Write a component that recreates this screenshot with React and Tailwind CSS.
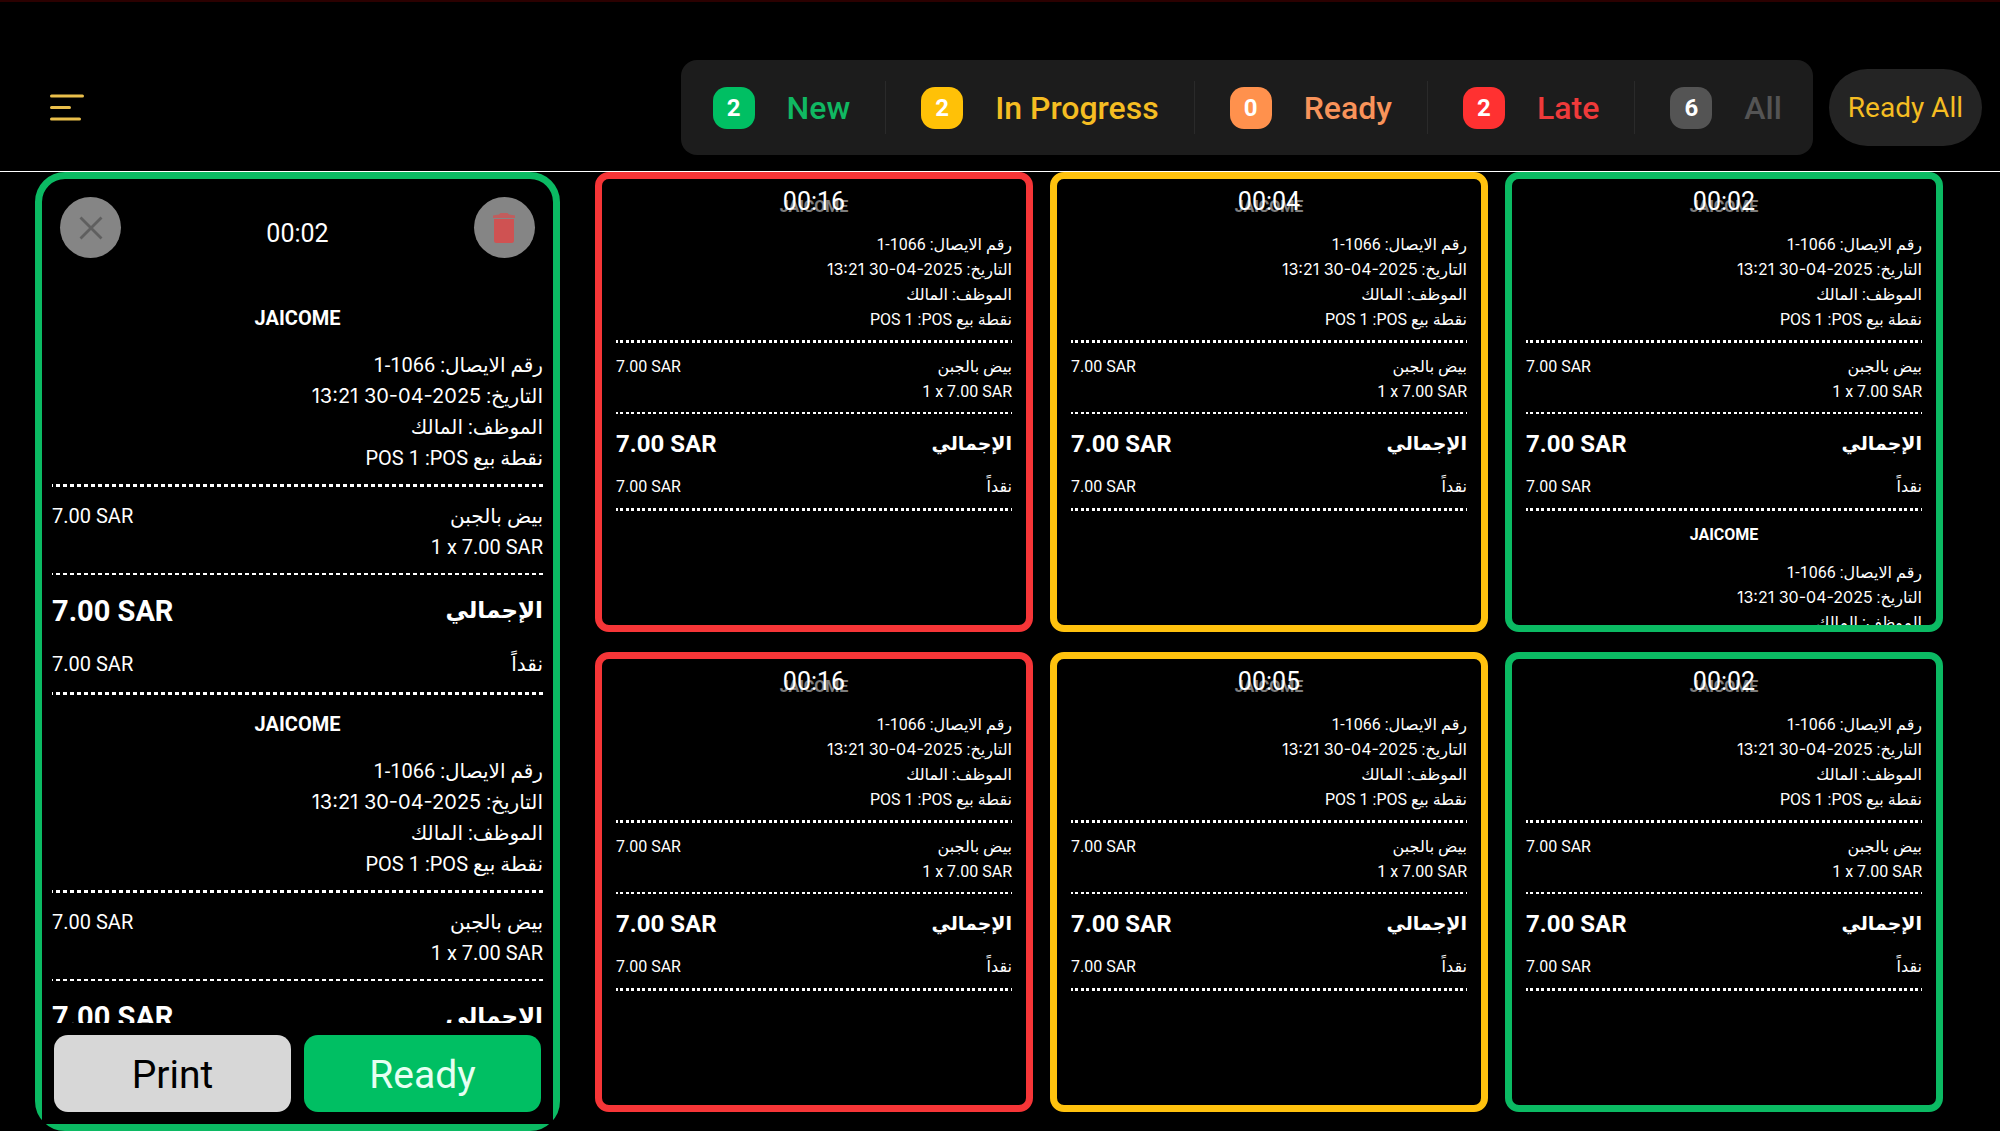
import { useState } from 'react'
import clsx from 'clsx'

const FILTERS = [
  { key: 'new', label: 'New', count: 2, badge: 'bg-[#00bf63]', text: 'text-[#10b862]' },
  { key: 'progress', label: 'In Progress', count: 2, badge: 'bg-[#ffc107]', text: 'text-[#f5bd22]' },
  { key: 'ready', label: 'Ready', count: 0, badge: 'bg-[#ff914d]', text: 'text-[#f9935a]' },
  { key: 'late', label: 'Late', count: 2, badge: 'bg-[#ff3131]', text: 'text-[#ef3a3a]' },
  { key: 'all', label: 'All', count: 6, badge: 'bg-[#545454]', text: 'text-[#545454]' },
]

const TICKETS = [
  { id: 1, time: '00:16', status: 'late', copies: 1 },
  { id: 2, time: '00:04', status: 'progress', copies: 1 },
  { id: 3, time: '00:02', status: 'new', copies: 2 },
  { id: 4, time: '00:16', status: 'late', copies: 1 },
  { id: 5, time: '00:05', status: 'progress', copies: 1 },
  { id: 6, time: '00:02', status: 'new', copies: 1 },
]

const BORDERS = {
  late: 'border-[#f63537]',
  progress: 'border-[#ffc20e]',
  new: 'border-[#0bba63]',
}

const SIZES = {
  lg: {
    text: 'text-[20px] leading-[31px]',
    info: 'mt-4',
    dots: 'bg-[repeating-linear-gradient(to_left,#fff_0px_4px,transparent_4px_7px)]',
    rule: 'mt-[10px]',
    items: 'mt-[14px]',
    total: 'mt-[14px] text-[29px] leading-[44px]',
    totalLabel: 'text-[23px]',
    cash: 'mt-4',
    last: 'mt-3',
    gap: 'space-y-[14px]',
  },
  sm: {
    text: 'text-[16px] leading-[25px]',
    info: 'mt-[13px]',
    dots: 'bg-[repeating-linear-gradient(to_left,#fff_0px_1px,transparent_1px_4px,#fff_4px_7px,transparent_7px_9px,#fff_9px_11px)]',
    rule: 'mt-2',
    items: 'mt-[11px]',
    total: 'mt-3 text-[24px] leading-[36px]',
    totalLabel: 'text-[19px]',
    cash: 'mt-3',
    last: 'mt-[9px]',
    gap: 'space-y-[11px]',
  },
}

function Receipt({ size }) {
  const s = SIZES[size]

  return (
    <div dir="rtl" className={s.text}>
      <p className="text-center font-bold">JAICOME</p>
      <div className={s.info}>
        <p>رقم الايصال: <bdi dir="ltr">1-1066</bdi></p>
        <p>
          التاريخ: <bdi dir="ltr" className="font-['Inter']">13:21 30-04-2025</bdi>
        </p>
        <p>الموظف: المالك</p>
        <p>نقطة بيع POS: <bdi dir="ltr">POS 1</bdi></p>
      </div>
      <div className={clsx('h-[3px]', s.rule, s.dots)} />
      <div className={clsx('flex items-start justify-between', s.items)}>
        <div>
          <p>بيض بالجبن</p>
          <p dir="ltr">1 x 7.00 SAR</p>
        </div>
        <span dir="ltr">7.00 SAR</span>
      </div>
      <div className={clsx('h-[2px]', s.rule, s.dots)} />
      <div className={clsx('flex justify-between font-bold', s.total)}>
        <span className={s.totalLabel}>الإجمالي</span>
        <span dir="ltr">7.00 SAR</span>
      </div>
      <div className={clsx('flex justify-between', s.cash)}>
        <span>نقداً</span>
        <span dir="ltr">7.00 SAR</span>
      </div>
      <div className={clsx('h-[3px]', s.last, s.dots)} />
    </div>
  )
}

function Ticket({ ticket }) {
  return (
    <article
      className={clsx(
        'relative min-h-0 overflow-hidden rounded-[14px] border-[7px] px-[14px] pt-[15px]',
        BORDERS[ticket.status],
      )}
    >
      <div className={SIZES.sm.gap}>
        {Array.from({ length: ticket.copies }, (_, i) => (
          <Receipt key={i} size="sm" />
        ))}
      </div>
      <div className="absolute inset-x-0 top-0 bg-black/50 pt-1 text-center text-[25px] leading-[38px]">
        {ticket.time}
      </div>
    </article>
  )
}

function ActiveTicket() {
  return (
    <section className="flex min-h-0 flex-col rounded-[30px] border-[7px] border-[#0bba63]">
      <div className="flex items-end justify-between px-[18px] pt-[18px] pb-[45px]">
        <button
          type="button"
          aria-label="Close"
          className="flex size-[61px] items-center justify-center rounded-full bg-[#858585]"
        >
          <svg viewBox="0 0 24 24" className="size-6" fill="none" stroke="#5f5f5f" strokeWidth="2.8">
            <path d="M1.5 1.5 22.5 22.5M22.5 1.5 1.5 22.5" />
          </svg>
        </button>
        <span className="text-[25px] leading-[48px]">00:02</span>
        <button
          type="button"
          aria-label="Delete"
          className="flex size-[61px] items-center justify-center rounded-full bg-[#858585]"
        >
          <svg viewBox="0 0 24 32" className="h-8 w-6" fill="#cf5252">
            <path d="M2 7h20v21.5a2.5 2.5 0 0 1-2.5 2.5h-15A2.5 2.5 0 0 1 2 28.5z" />
            <path d="M1 3.5 7 2.5 8.5 1h7L17 2.5l6 1V6H1z" opacity=".8" />
          </svg>
        </button>
      </div>

      <div className={clsx('min-h-0 flex-1 overflow-hidden px-[10px]', SIZES.lg.gap)}>
        <Receipt size="lg" />
        <Receipt size="lg" />
      </div>

      <div className="flex gap-[13px] bg-black p-3">
        <button
          type="button"
          className="h-[77px] flex-1 rounded-[14px] bg-[#d7d7d7] pt-1 text-[39px] text-black"
        >
          Print
        </button>
        <button
          type="button"
          className="h-[77px] flex-1 rounded-[14px] bg-[#00bf63] pt-1 text-[39px] text-[#e6fff2]"
        >
          Ready
        </button>
      </div>
    </section>
  )
}

export default function App() {
  const [, setFilter] = useState('all')

  return (
    <div className="flex h-screen flex-col overflow-hidden bg-black font-['Roboto','Noto_Sans','DejaVu_Sans',sans-serif] text-white">
      <header className="flex h-[172px] shrink-0 items-center border-t-2 border-b border-t-[#2b0000] border-b-white pt-[42px] pr-[18px] pl-[50px]">
        <button type="button" aria-label="Menu">
          <svg viewBox="0 0 34 28" className="h-7 w-[34px]" fill="none" stroke="#eabf4b" strokeWidth="3" strokeLinecap="round">
            <path d="M1.5 2h31M1.5 13.5h18M1.5 25h28" />
          </svg>
        </button>

        <nav className="ml-auto flex h-[95px] items-center rounded-[16px] bg-[#1c1c1c] pr-[31px] pl-8">
          {FILTERS.map((item, index) => (
            <button
              key={item.key}
              type="button"
              onClick={() => setFilter(item.key)}
              className={clsx(
                'flex h-[53px] items-center gap-8',
                index > 0 && 'border-l border-[#2a2a2a] pl-[35px]',
                index < FILTERS.length - 1 && 'pr-[35px]',
              )}
            >
              <span
                className={clsx(
                  'flex size-[42px] items-center justify-center rounded-[14px] text-[24px] font-bold text-white',
                  item.badge,
                )}
              >
                {item.count}
              </span>
              <span className={clsx('text-[32px] font-medium', item.text)}>{item.label}</span>
            </button>
          ))}
        </nav>

        <button
          type="button"
          className="ml-4 h-[77px] rounded-full bg-[#242424] px-[19px] text-[28px] text-[#f5bd22]"
        >
          Ready All
        </button>
      </header>

      <main className="grid min-h-0 flex-1 grid-cols-[525fr_1348fr] gap-[35px] pr-[57px] pl-[35px]">
        <ActiveTicket />
        <div className="grid min-h-0 grid-cols-3 grid-rows-2 gap-x-[17px] gap-y-5 pb-[19px]">
          {TICKETS.map((ticket) => (
            <Ticket key={ticket.id} ticket={ticket} />
          ))}
        </div>
      </main>
    </div>
  )
}
